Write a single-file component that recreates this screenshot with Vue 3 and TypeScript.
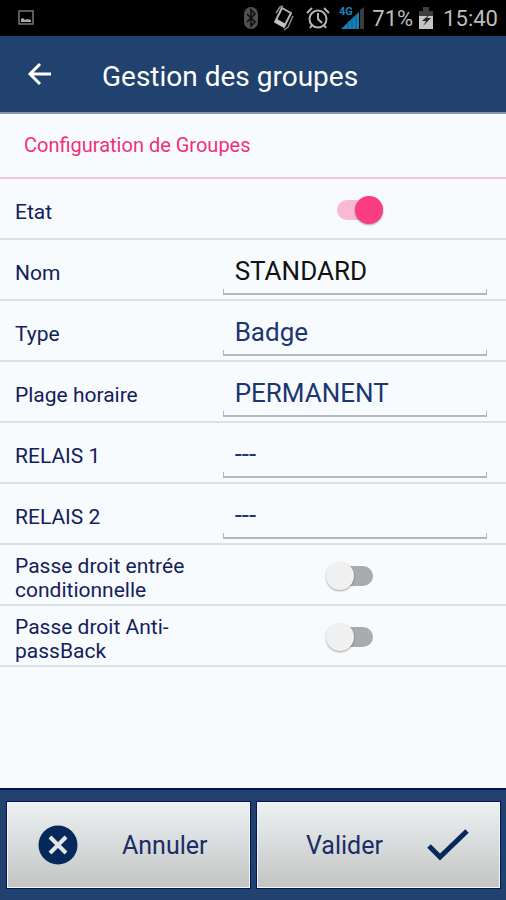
<script setup lang="ts">
import { reactive } from 'vue'

interface Field {
  id: string
  label: string
  kind: 'switch' | 'text' | 'select'
  options?: string[]
}

const fields: Field[] = [
  { id: 'etat', label: 'Etat', kind: 'switch' },
  { id: 'nom', label: 'Nom', kind: 'text' },
  { id: 'type', label: 'Type', kind: 'select', options: ['Badge'] },
  { id: 'plage', label: 'Plage horaire', kind: 'select', options: ['PERMANENT'] },
  { id: 'relais1', label: 'RELAIS 1', kind: 'select', options: ['---'] },
  { id: 'relais2', label: 'RELAIS 2', kind: 'select', options: ['---'] },
  { id: 'entree', label: 'Passe droit entrée conditionnelle', kind: 'switch' },
  { id: 'antipass', label: 'Passe droit Anti-passBack', kind: 'switch' },
]

const toggles = reactive<Record<string, boolean>>({ etat: true, entree: false, antipass: false })
const values = reactive<Record<string, string>>({
  nom: 'STANDARD',
  type: 'Badge',
  plage: 'PERMANENT',
  relais1: '---',
  relais2: '---',
})
</script>

<template>
  <div class="screen">
    <div class="status">
      <svg class="shot" width="16" height="16" viewBox="0 0 16 16">
        <rect x="1" y="1" width="14" height="13" fill="none" stroke="#777" stroke-width="1.5" />
        <path d="M3 12V9l2-1 2 2 2-1 4 1v2z" fill="#aaa" />
      </svg>
      <div class="indicators">
        <svg width="16" height="24" viewBox="0 0 16 24">
          <rect x="1" y="1" width="14" height="22" rx="7" fill="#505050" />
          <path d="M4 8l8 8-4 4V4l4 4-8 8" fill="none" stroke="#111" stroke-width="1.6" />
        </svg>
        <svg width="22" height="26" viewBox="0 0 22 26">
          <path d="M9 3l9 5-7 14-9-5z" fill="none" stroke="#b5b5b5" stroke-width="2" stroke-linejoin="round" />
          <path d="M2 17l9 5 2-3-9-5z" fill="#c4c4c4" />
          <path d="M3 8l4-6 3-1M20 11l-5 11-4 3" fill="none" stroke="#8c8c8c" stroke-width="1.5" />
        </svg>
        <svg width="24" height="24" viewBox="0 0 24 24" fill="none" stroke="#b5b5b5" stroke-width="2">
          <circle cx="12" cy="13" r="8.5" />
          <path d="M12 7v6l4 4M1 7l5-5M23 7l-5-5M6 19l-2 3M18 19l2 3" />
        </svg>
        <svg width="26" height="24" viewBox="0 0 26 24">
          <path d="M2 23L20 6v17z" fill="#1683b8" />
          <path d="M9 15v8M13 12v11M17 9v14" stroke="#0b5d8a" stroke-width="1" />
          <path d="M21 4l4-3v22h-4z" fill="#3c3c3c" />
          <text x="0" y="9" class="net">4G</text>
        </svg>
        <span class="percent">71%</span>
        <svg width="16" height="24" viewBox="0 0 16 24">
          <path d="M1 5h4V1h6v4h4v6H1z" fill="#3f3f3f" />
          <path d="M1 10h14v13H1z" fill="#c4c4c4" />
          <path d="M12 8L4 15h4l-3 5 8-8H9z" fill="#222" />
        </svg>
        <span class="clock">15:40</span>
      </div>
    </div>

    <header class="bar">
      <button class="back" type="button" aria-label="Retour">
        <svg width="24" height="24" viewBox="0 0 24 24" fill="none" stroke="#fff" stroke-width="3">
          <path d="M24 12H4M13 2L3 12l10 10" />
        </svg>
      </button>
      <h1>Gestion des groupes</h1>
    </header>

    <main class="body">
      <h2>Configuration de Groupes</h2>
      <div v-for="f in fields" :key="f.id" class="row">
        <label :for="f.id">{{ f.label }}</label>
        <div class="control">
          <input v-if="f.kind === 'switch'" :id="f.id" v-model="toggles[f.id]" type="checkbox" class="switch" />
          <input v-else-if="f.kind === 'text'" :id="f.id" v-model="values[f.id]" type="text" class="field name" />
          <select v-else :id="f.id" v-model="values[f.id]" class="field">
            <option v-for="o in f.options" :key="o">{{ o }}</option>
          </select>
        </div>
      </div>
    </main>

    <footer class="actions">
      <button type="button" class="cancel">
        <svg width="40" height="40" viewBox="0 0 40 40">
          <circle cx="20" cy="20" r="19.5" fill="#06295c" />
          <path d="M12 12l16 16M28 12L12 28" stroke="#e3e6e6" stroke-width="4" />
        </svg>
        <span>Annuler</span>
      </button>
      <button type="button" class="confirm">
        <span>Valider</span>
        <svg width="42" height="32" viewBox="0 0 42 32">
          <path d="M2 17l11 11L40 2" fill="none" stroke="#06295c" stroke-width="5" />
        </svg>
      </button>
    </footer>
  </div>
</template>

<style>
body {
  margin: 0;
}
</style>

<style scoped>
.screen {
  display: flex;
  flex-direction: column;
  min-height: 100vh;
  background: #f7fbfe;
  color: #14205a;
  font-family: Roboto, 'Liberation Sans', sans-serif;
}

.status {
  display: flex;
  align-items: center;
  justify-content: space-between;
  height: 36px;
  padding: 0 8px 0 18px;
  background: #000;
  color: #bdbdbd;
  font-size: 22px;
}

.indicators {
  display: flex;
  align-items: center;
}

.indicators svg + svg {
  margin-left: 11px;
}

.indicators svg:nth-child(2) {
  margin-left: 14px;
}

.indicators svg:nth-child(4) {
  margin-left: 9px;
}

.percent {
  margin: 0 5px 0 7px;
}

.clock {
  margin-left: 9px;
}

.net {
  fill: #1683b8;
  font-size: 11px;
  font-weight: 700;
}

.bar {
  display: flex;
  align-items: center;
  gap: 51px;
  height: 76px;
  padding: 0 27px;
  border-bottom: 2px solid #8296b3;
  background: #21426f;
  color: #fff;
}

.back {
  display: flex;
  padding: 0;
  border: 0;
  background: none;
}

h1 {
  margin: 4px 0 0;
  font-size: 28px;
  font-weight: 400;
}

.body {
  flex: 1;
}

h2 {
  margin: 0;
  padding: 0 24px;
  border-bottom: 2px solid #f9c6d6;
  color: #f0307c;
  font-size: 20px;
  font-weight: 400;
  line-height: 63px;
}

.row {
  display: grid;
  grid-template-columns: 44% 1fr;
  align-items: center;
  height: 59px;
  padding: 0 19px 0 15px;
  border-bottom: 2px solid #dde1e4;
}

.row label {
  padding: 6px 30px 0 0;
  font-size: 21px;
  line-height: 24px;
}

.control {
  display: flex;
  align-items: flex-end;
  justify-content: center;
}

.field {
  appearance: none;
  box-sizing: border-box;
  width: 100%;
  height: 50px;
  margin: 0;
  padding: 5px 12px 0;
  border: 0;
  border-bottom: 2px solid #b4b8bc;
  border-radius: 0;
  background:
    linear-gradient(#b4b8bc, #b4b8bc) left bottom / 1px 4px no-repeat,
    linear-gradient(#b4b8bc, #b4b8bc) right bottom / 1px 4px no-repeat;
  color: #1b3670;
  font: 26px Roboto, 'Liberation Sans', sans-serif;
}

.field.name {
  color: #111;
}

.switch {
  position: relative;
  appearance: none;
  width: 58px;
  height: 28px;
  margin: 3px 0 0;
}

.switch::before {
  position: absolute;
  inset: 4px 11px;
  border-radius: 10px;
  background: #a9abaf;
  content: '';
}

.switch::after {
  position: absolute;
  top: 0;
  left: 0;
  width: 28px;
  height: 28px;
  border-radius: 50%;
  background: #f0f0f0;
  box-shadow: 0 1px 2px rgb(0 0 0 / 35%);
  content: '';
}

.switch:checked::before {
  background: #f8b9d3;
}

.switch:checked::after {
  left: 29px;
  background: #fb3c7f;
}

.actions {
  display: grid;
  grid-template-columns: 1fr 1fr;
  gap: 7px;
  padding: 12px 6px 12px 7px;
  border-top: 2px solid #04145c;
  background: #21426f;
}

.actions button {
  display: flex;
  align-items: center;
  height: 86px;
  border: 1px solid #f4f7f8;
  outline: 1px solid #04145c;
  background: linear-gradient(#edf1f1, #c3c5c5);
  color: #1b2c66;
  font: 25px Roboto, 'Liberation Sans', sans-serif;
}

.cancel {
  justify-content: flex-start;
  gap: 44px;
  padding: 0 30px;
}

.confirm {
  justify-content: space-between;
  padding: 0 30px 0 48px;
}
</style>
